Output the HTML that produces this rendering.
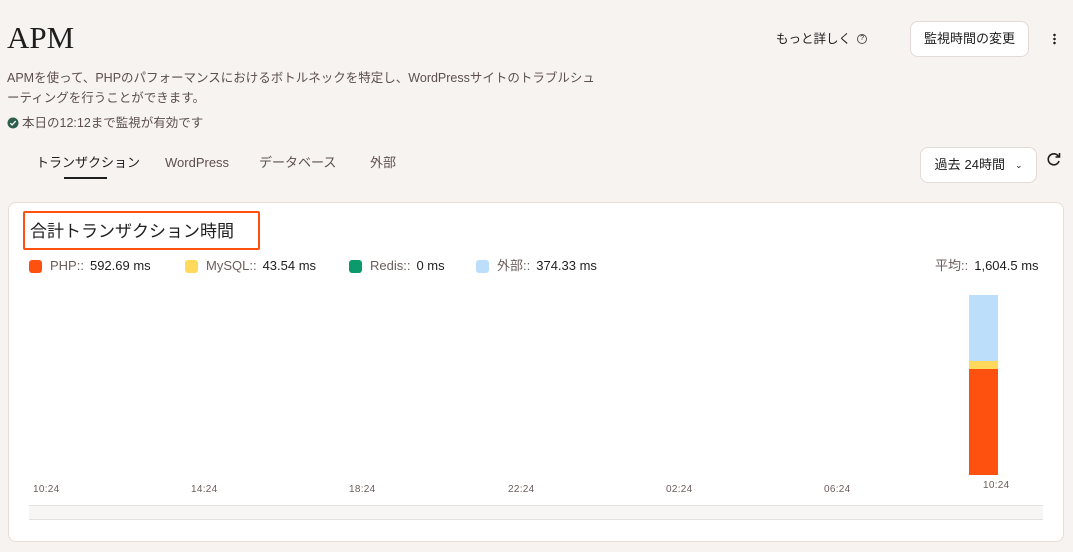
<!DOCTYPE html>
<html><head><meta charset="utf-8"><style>
*{margin:0;padding:0;box-sizing:border-box}
body{width:1073px;height:552px;background:#f7f3f1;font-family:"Liberation Sans","Noto Sans CJK JP",sans-serif;position:relative;overflow:hidden;color:#1e1e1e}
.a{position:absolute;white-space:nowrap;line-height:16px}
.btn{position:absolute;background:#fff;border:1px solid #e3d9d5;border-radius:8px;font-size:13px;display:flex;align-items:center;justify-content:center;color:#1e1e1e;line-height:16px}
.sw{display:inline-block;width:13px;height:13px;border-radius:3px;vertical-align:-2px;margin-right:8px}
.lg{font-size:13px;color:#6b5d5a;display:flex;align-items:center;height:16px}
.lg b{font-weight:normal;color:#1e1e1e;margin-left:6px}
.tk{position:absolute;top:484px;font-size:10px;color:#6b5d5a;letter-spacing:.3px;line-height:12px}
</style></head><body>
<div class="a" style="left:7px;top:20px;font-family:'Liberation Serif',serif;font-size:31px;color:#1e1e1e;line-height:36px">APM</div>
<div class="a" style="left:7px;top:68px;font-size:12.5px;color:#5c4f4c;line-height:20px;white-space:normal;width:600px">APMを使って、PHPのパフォーマンスにおけるボトルネックを特定し、WordPressサイトのトラブルシューティングを行うことができます。</div>
<div class="a" style="left:7px;top:115px;font-size:12.5px;color:#5c4f4c;display:flex;align-items:center"><svg width="12" height="12" viewBox="0 0 12 12" style="margin-right:3px"><circle cx="6" cy="6" r="5.5" fill="#2e5e4e"/><path d="M3.3 6.2l1.8 1.7 3.6-3.8" stroke="#fff" stroke-width="1.3" fill="none"/></svg>本日の12:12まで監視が有効です</div>
<div class="a" style="left:36px;top:155px;font-size:13px;color:#1e1e1e">トランザクション</div>
<div class="a" style="left:64px;top:177px;width:43px;height:2px;background:#1e1e1e"></div>
<div class="a" style="left:165px;top:155px;font-size:13px;color:#5c4f4c">WordPress</div>
<div class="a" style="left:259px;top:155px;font-size:13px;color:#5c4f4c">データベース</div>
<div class="a" style="left:370px;top:155px;font-size:13px;color:#5c4f4c">外部</div>
<div class="a" style="left:776px;top:31px;font-size:12.5px;color:#1e1e1e;display:flex;align-items:center">もっと詳しく <span style="display:inline-block;width:10px;height:10px;border:1px solid #555;border-radius:50%;font-size:7px;text-align:center;line-height:8px;margin-left:6px">?</span></div>
<div class="btn" style="left:910px;top:21px;width:119px;height:36px">監視時間の変更</div>
<div class="a" style="left:1053px;top:33px;width:3px;height:12px;background:radial-gradient(circle,#1e1e1e 1.2px,transparent 1.4px) 0 0/3px 4px"></div>
<div class="btn" style="left:920px;top:147px;width:117px;height:36px">過去 <span style="margin-left:4px">24時間</span><span style="margin-left:10px;font-size:9px">⌄</span></div>
<svg class="a" style="left:1046px;top:151px" width="16" height="16" viewBox="0 0 16 16"><path d="M12.5 5.5A5.5 5.5 0 1 0 13 10" stroke="#1e1e1e" stroke-width="1.6" fill="none"/><path d="M13.5 2v4h-4" stroke="#1e1e1e" stroke-width="1.6" fill="none"/></svg>
<div class="a" style="left:8px;top:202px;width:1056px;height:340px;background:#fff;border:1px solid #e8dcd7;border-radius:8px"></div>
<div class="a" style="left:23px;top:211px;width:237px;height:39px;border:2px solid #fe5110;border-radius:2px"></div>
<div class="a" style="left:30px;top:221px;font-size:17px;color:#1e1e1e;line-height:22px">合計トランザクション時間</div>
<div class="a lg" style="left:29px;top:258px"><span class="sw" style="background:#fe5110"></span>PHP::<b>592.69 ms</b></div>
<div class="a lg" style="left:185px;top:258px"><span class="sw" style="background:#ffd95c"></span>MySQL::<b>43.54 ms</b></div>
<div class="a lg" style="left:349px;top:258px"><span class="sw" style="background:#0c9a6c"></span>Redis::<b>0 ms</b></div>
<div class="a lg" style="left:476px;top:258px"><span class="sw" style="background:#bcdefb"></span>外部::<b>374.33 ms</b></div>
<div class="a lg" style="left:935px;top:258px">平均::<b>1,604.5 ms</b></div>
<div class="a" style="left:969px;top:295px;width:29px;height:66px;background:#bcdefb"></div>
<div class="a" style="left:969px;top:361px;width:29px;height:8px;background:#ffd95c"></div>
<div class="a" style="left:969px;top:369px;width:29px;height:106px;background:#fe5110"></div>
<div class="tk" style="left:33px">10:24</div>
<div class="tk" style="left:191px">14:24</div>
<div class="tk" style="left:349px">18:24</div>
<div class="tk" style="left:508px">22:24</div>
<div class="tk" style="left:666px">02:24</div>
<div class="tk" style="left:824px">06:24</div>
<div class="tk" style="left:983px;top:480px">10:24</div>
<div class="a" style="left:29px;top:505px;width:1014px;height:15px;background:#f7f6f5;border-top:1px solid #e3e0df;border-bottom:1px solid #e3e0df"></div>
</body></html>
